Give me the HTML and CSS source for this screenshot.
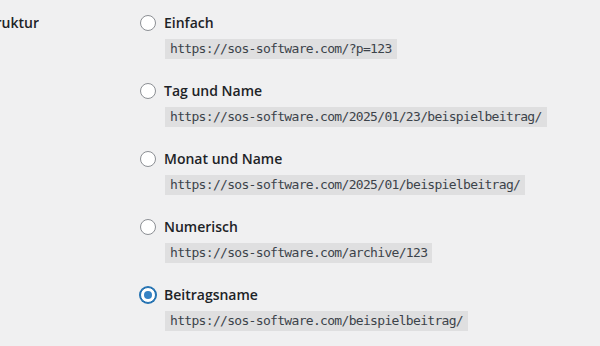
FILE: index.html
```html
<!DOCTYPE html>
<html lang="de">
<head>
  <meta charset="UTF-8">
  <title>Permalink-Einstellungen</title>
  <link rel="stylesheet" href="styles.css">
</head>
<body>
  <div class="zeile">
    <div class="titel"><span>Permalink-Struktur</span></div>
    <div class="optionen">
      <div class="option">
        <label><input type="radio" name="struktur"> Einfach</label>
        <code>https://sos-software.com/?p=123</code>
      </div>
      <div class="option">
        <label><input type="radio" name="struktur"> Tag und Name</label>
        <code>https://sos-software.com/2025/01/23/beispielbeitrag/</code>
      </div>
      <div class="option">
        <label><input type="radio" name="struktur"> Monat und Name</label>
        <code>https://sos-software.com/2025/01/beispielbeitrag/</code>
      </div>
      <div class="option">
        <label><input type="radio" name="struktur"> Numerisch</label>
        <code>https://sos-software.com/archive/123</code>
      </div>
      <div class="option">
        <label><input type="radio" name="struktur" class="aktiv" checked> Beitragsname</label>
        <code>https://sos-software.com/beispielbeitrag/</code>
      </div>
    </div>
  </div>
</body>
</html>
```

FILE: styles.css
```css
* {
  box-sizing: border-box;
}

body {
  margin: 0;
  background: #f0f0f1;
  color: #1d2327;
  font-family: "Open Sans", sans-serif;
  font-size: 14px;
  overflow: hidden;
}

.zeile {
  display: flex;
}

.titel {
  width: 39px;
  display: flex;
  justify-content: flex-end;
  overflow: hidden;
  white-space: nowrap;
  padding-top: 13px;
  line-height: 20px;
  font-weight: 600;
}

.optionen {
  padding-left: 101px;
  padding-top: 13px;
}

.option {
  margin-bottom: 22px;
}

.option label {
  display: flex;
  align-items: center;
  gap: 8px;
  line-height: 20px;
  font-weight: 600;
}

.option code {
  display: inline-block;
  margin: 6px 0 0 25px;
  padding: 3px 5px;
  line-height: 14px;
  font-family: "DejaVu Sans Mono", monospace;
  font-size: 13px;
  letter-spacing: -0.68px;
  color: #3c434a;
  background: rgba(0, 0, 0, 0.07);
}

input[type="radio"] {
  appearance: none;
  margin: 0;
  width: 16px;
  height: 16px;
  border: 1px solid #8c8f94;
  border-radius: 50%;
  background: #fff;
  display: grid;
  place-items: center;
}

input[type="radio"]:checked {
  border-color: #2271b1;
  box-shadow: 0 0 0 1px #2271b1;
}

input[type="radio"]:checked::before {
  content: "";
  width: 8px;
  height: 8px;
  border-radius: 50%;
  background: #3582c4;
}
```
